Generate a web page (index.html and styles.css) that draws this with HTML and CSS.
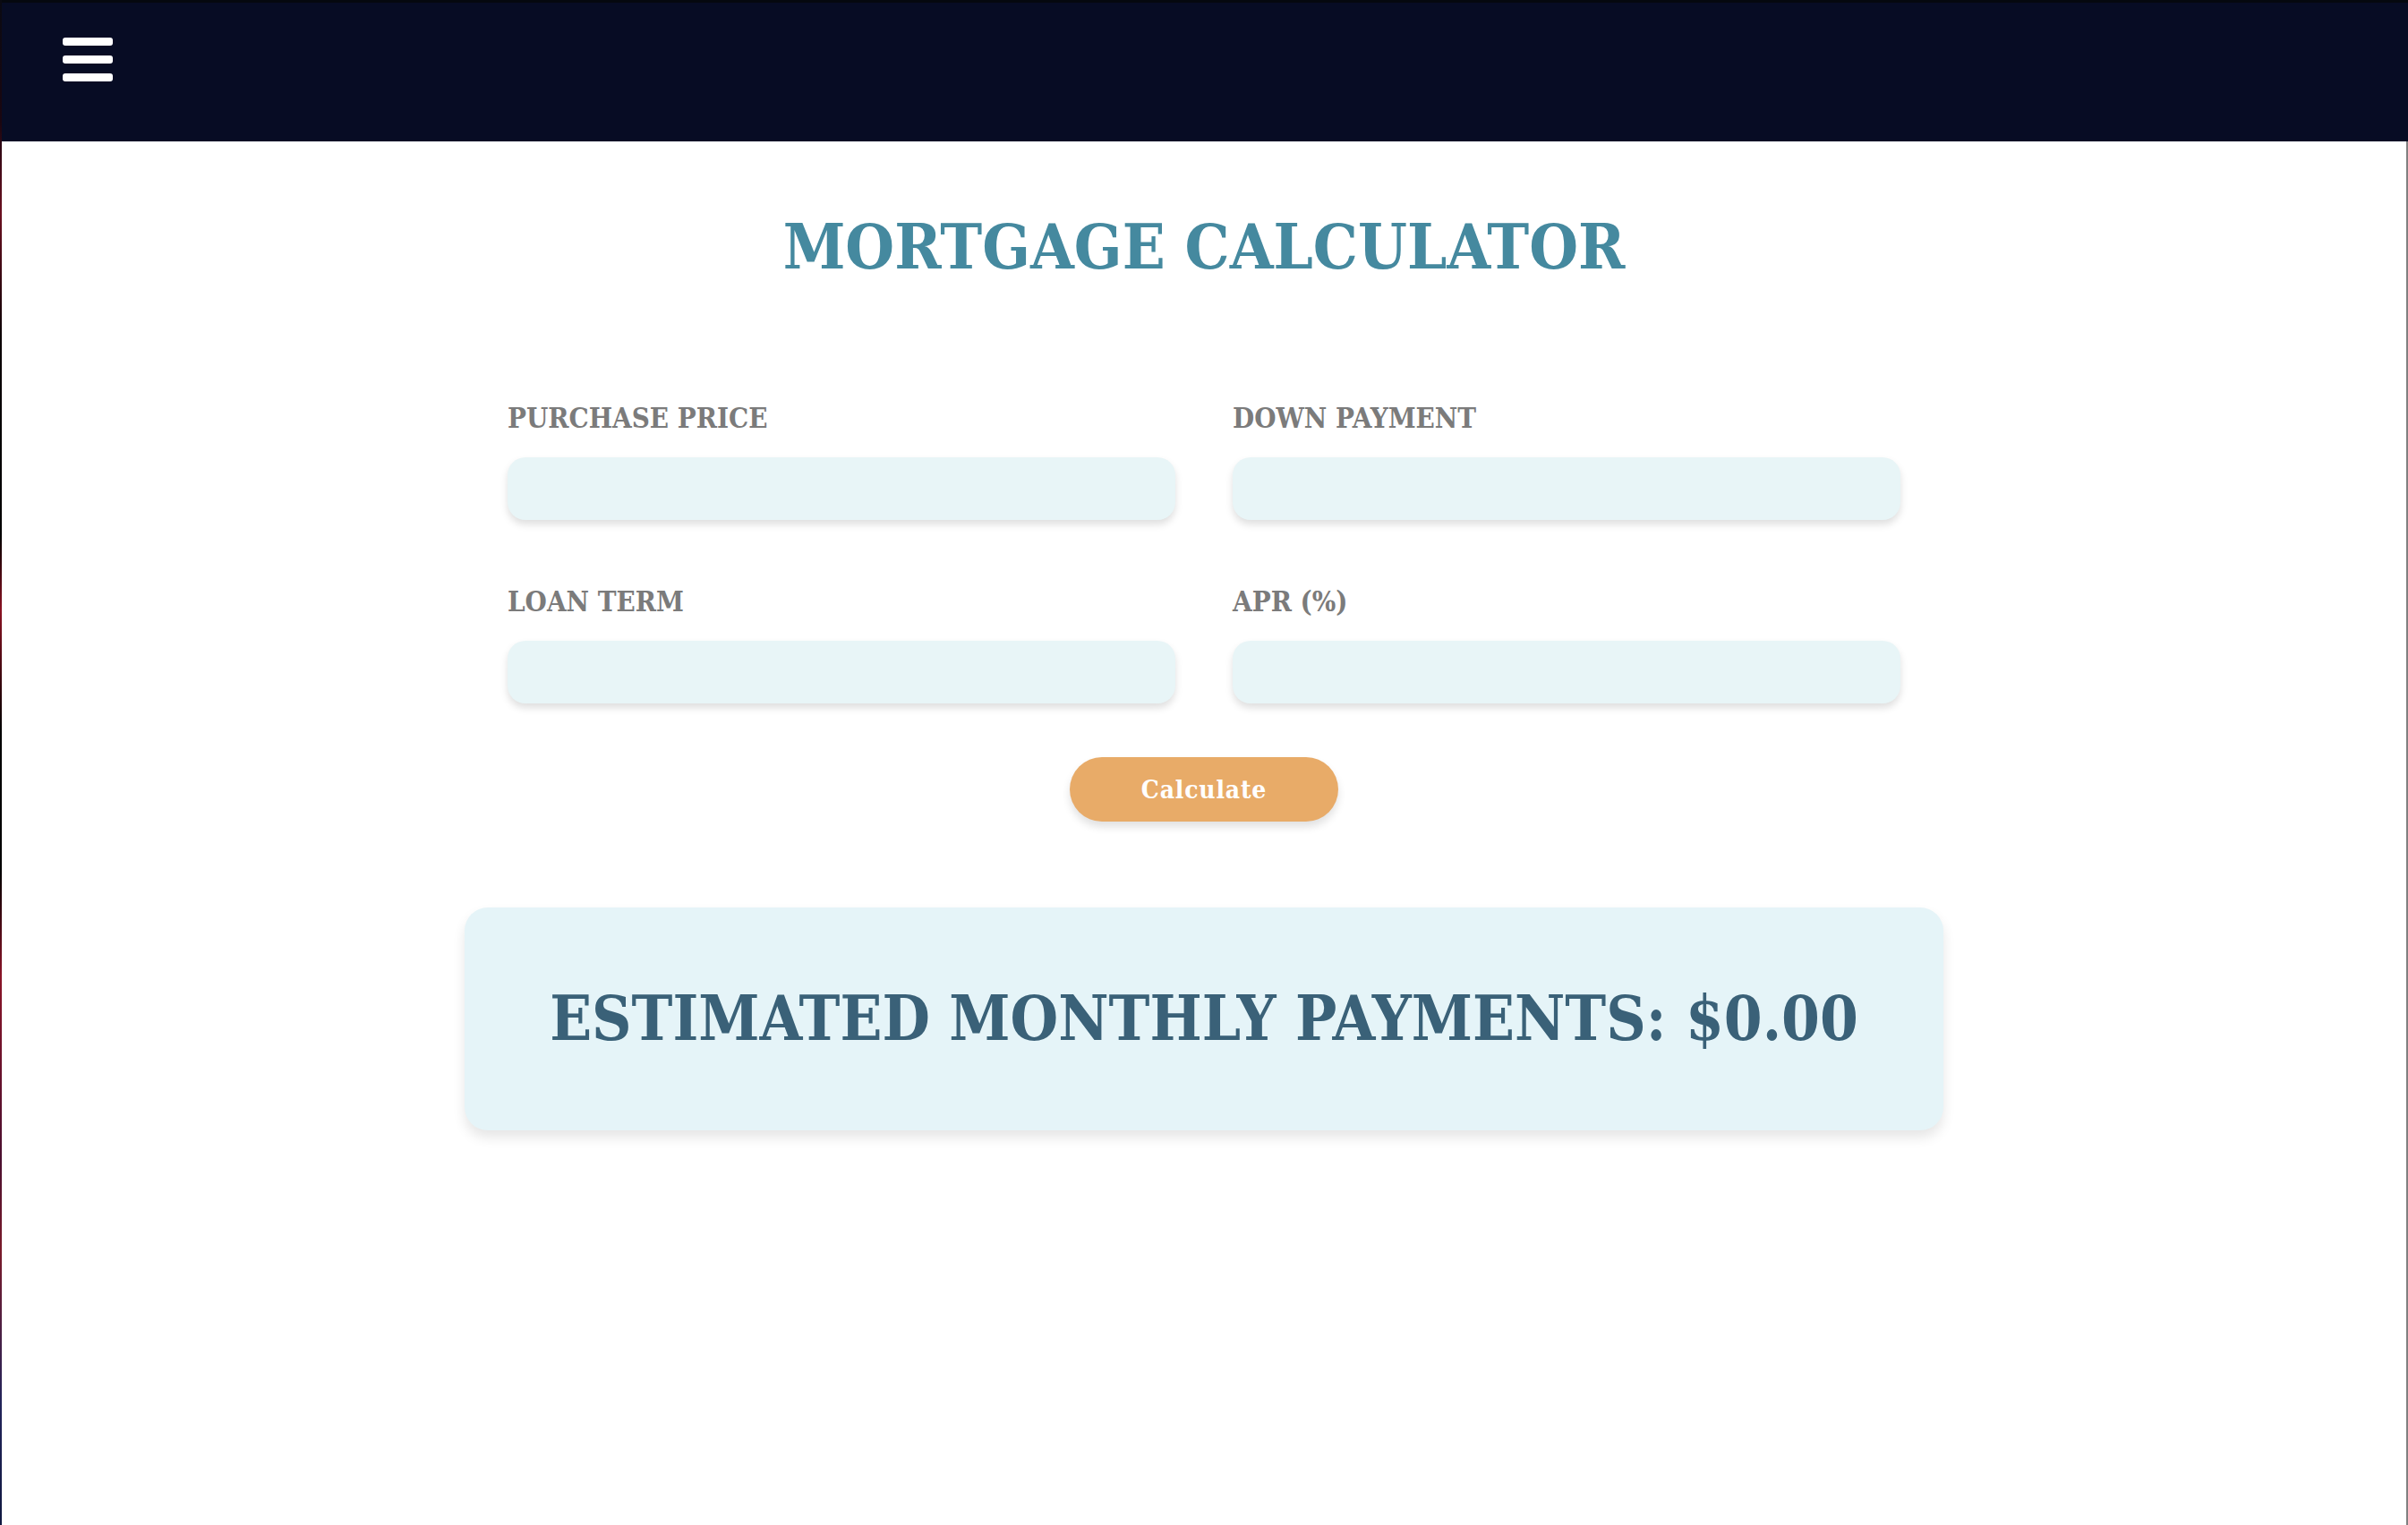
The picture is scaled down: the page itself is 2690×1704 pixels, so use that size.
FILE: index.html
```html
<!DOCTYPE html>
<html lang="en">
<head>
<meta charset="utf-8">
<title>Mortgage Calculator</title>
<link rel="stylesheet" href="styles.css">
</head>
<body>
<div class="app">
  <header class="topbar">
    <button class="menu" aria-label="Menu">
      <span class="bar"></span>
      <span class="bar"></span>
      <span class="bar"></span>
    </button>
  </header>
  <main class="main">
    <h1 class="title">MORTGAGE CALCULATOR</h1>
    <section class="calc">
      <form class="form">
        <div class="field">
          <label class="label" for="price">PURCHASE PRICE</label>
          <input class="input" id="price" type="text">
        </div>
        <div class="field">
          <label class="label" for="down">DOWN PAYMENT</label>
          <input class="input" id="down" type="text">
        </div>
        <div class="field">
          <label class="label" for="term">LOAN TERM</label>
          <input class="input" id="term" type="text">
        </div>
        <div class="field">
          <label class="label" for="apr">APR (%)</label>
          <input class="input" id="apr" type="text">
        </div>
        <div class="actions">
          <button class="btn" type="button">Calculate</button>
        </div>
      </form>
      <div class="result">
        <h2 class="result-text">ESTIMATED MONTHLY PAYMENTS: $0.00</h2>
      </div>
    </section>
  </main>
</div>
</body>
</html>
```
FILE: styles.css
```css
html, body {
  margin: 0;
  padding: 0;
}
body {
  background: linear-gradient(to bottom, #0a0a12 0%, #1a0610 8%, #6b1020 14%, #0c0306 22%, #000 35%, #8a1222 40%, #000 48%, #000 57%, #8a1428 64%, #4a1030 76%, #7a1a2a 82%, #22245a 92%, #101840 100%);
  font-family: "DejaVu Serif", "Liberation Serif", serif;
  font-stretch: semi-condensed;
  min-height: 1704px;
}
.app {
  margin-left: 2px;
  background: #fff;
  min-height: 1704px;
  display: flex;
  flex-direction: column;
}
.topbar {
  height: 158px;
  box-sizing: border-box;
  background: #070c24;
  border-top: 3px solid #05080f;
  padding: 39px 0 0 68px;
}
.menu {
  display: flex;
  flex-direction: column;
  gap: 11px;
  background: none;
  border: 0;
  padding: 0;
  cursor: pointer;
}
.bar {
  display: block;
  width: 56px;
  height: 9px;
  border-radius: 3px;
  background: #fff;
}
.main {
  flex: 1;
  border-right: 2px solid #808080;
  display: flex;
  flex-direction: column;
  align-items: center;
}
.title {
  margin: 78px 0 0;
  font-size: 70px;
  line-height: 79px;
  font-weight: bold;
  color: #45899f;
  text-align: center;
}
.calc {
  width: 1652px;
  margin-top: 135px;
}
.form {
  display: grid;
  grid-template-columns: 746px 746px;
  column-gap: 64px;
  row-gap: 74px;
  padding: 0 48px;
}
.field {
  display: flex;
  flex-direction: column;
}
.label {
  font-size: 31px;
  line-height: 35px;
  font-weight: bold;
  color: #7b7b7b;
}
.input {
  margin-top: 26px;
  height: 70px;
  box-sizing: border-box;
  border: 0;
  border-radius: 20px;
  background: #e8f5f7;
  box-shadow: 0 5px 9px rgba(0, 0, 0, 0.13);
  outline: none;
}
.actions {
  grid-column: 1 / -1;
  display: flex;
  justify-content: center;
  margin-top: -14px;
}
.btn {
  width: 300px;
  height: 72px;
  border: 0;
  border-radius: 36px;
  background: #e8ab68;
  color: #fff;
  font-family: "DejaVu Serif", serif;
  font-stretch: semi-condensed;
  font-weight: bold;
  font-size: 28px;
  letter-spacing: 0.8px;
  box-shadow: 0 6px 10px rgba(0, 0, 0, 0.12);
  cursor: pointer;
}
.result {
  margin-top: 96px;
  height: 249px;
  box-sizing: border-box;
  border-radius: 26px;
  background: #e5f4f8;
  box-shadow: 0 8px 14px rgba(0, 0, 0, 0.1);
  display: flex;
  align-items: center;
  justify-content: center;
}
.result-text {
  margin: 0;
  font-size: 68.5px;
  line-height: 79px;
  font-weight: bold;
  color: #3a6178;
}
```
